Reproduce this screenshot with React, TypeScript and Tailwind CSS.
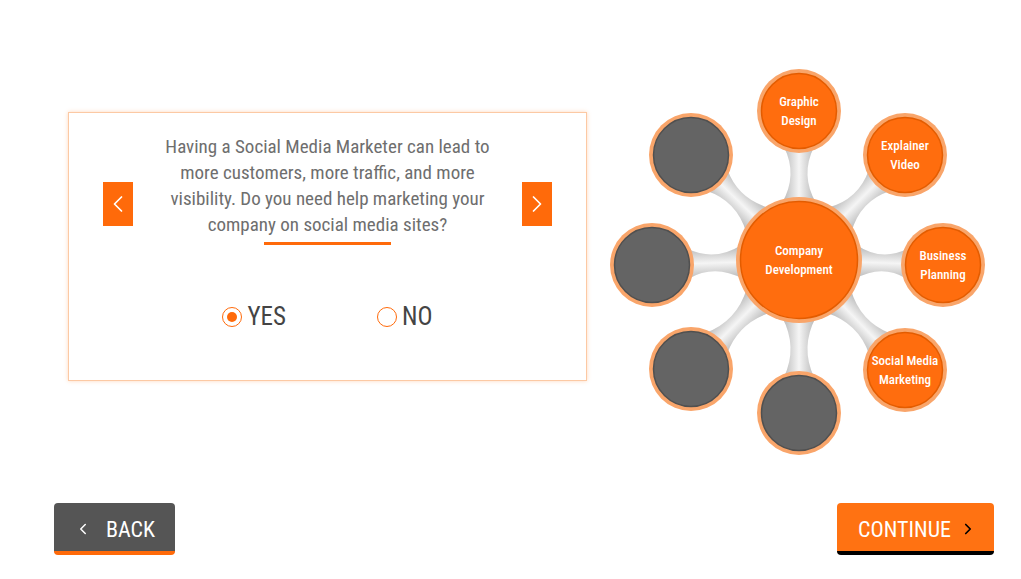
import React from "react";
import { ChevronLeft, ChevronRight } from "lucide-react";

const ORANGE = "#ff6d0e";

type Node = { x: number; y: number; lines?: string[] };

// diagram coordinates, origin at the svg's top-left corner
const CENTER = { x: 195, y: 198, r: 63 };
const R = 42;

const nodes: Node[] = [
  { x: 195, y: 49, lines: ["Graphic", "Design"] },
  { x: 301, y: 93, lines: ["Explainer", "Video"] },
  { x: 339, y: 203, lines: ["Business", "Planning"] },
  { x: 301, y: 308, lines: ["Social Media", "Marketing"] },
  { x: 195, y: 351 },
  { x: 87, y: 307 },
  { x: 48, y: 203 },
  { x: 87, y: 93 },
];

function Spoke({ n }: { n: Node }) {
  const dx = n.x - CENTER.x;
  const dy = n.y - CENTER.y;
  const d = Math.sqrt(dx * dx + dy * dy);
  const angle = (Math.atan2(dy, dx) * 180) / Math.PI;
  const x0 = CENTER.r - 6;
  const x1 = d - R + 6;
  const mid = (x0 + x1) / 2;
  const path = `M ${x0} -17 Q ${mid} -1 ${x1} -15 L ${x1} 15 Q ${mid} 1 ${x0} 17 Z`;
  return (
    <path
      d={path}
      fill="url(#tube)"
      transform={`translate(${CENTER.x} ${CENTER.y}) rotate(${angle})`}
    />
  );
}

function Bubble({ x, y, r, lines, size }: { x: number; y: number; r: number; lines?: string[]; size: number }) {
  const filled = !!lines;
  return (
    <g>
      <circle cx={x} cy={y} r={r} fill="#f9a56a" />
      <circle cx={x} cy={y} r={r - 4.5} fill={filled ? ORANGE : "#646464"} stroke={filled ? "#e35c00" : "#505050"} strokeWidth={1.5} />
      {lines &&
        lines.map((t, i) => (
          <text
            key={t}
            x={x}
            y={y + (i - (lines.length - 1) / 2) * (size + 6) + size * 0.36}
            textAnchor="middle"
            fill="#fff"
            fontSize={size}
            fontWeight={500}
            fontStretch="condensed"
            fontFamily="Roboto, sans-serif"
          >
            {t}
          </text>
        ))}
    </g>
  );
}

function Diagram() {
  return (
    <svg width={390} height={400} viewBox="0 0 390 400" className="block">
      <defs>
        <linearGradient id="tube" x1="0" y1="0" x2="0" y2="1">
          <stop offset="0" stopColor="#b5b5b5" />
          <stop offset="0.5" stopColor="#f5f5f5" />
          <stop offset="1" stopColor="#b5b5b5" />
        </linearGradient>
      </defs>
      {nodes.map((n, i) => (
        <Spoke key={i} n={n} />
      ))}
      {nodes.map((n, i) => (
        <Bubble key={i} x={n.x} y={n.y} r={R} lines={n.lines} size={13} />
      ))}
      <Bubble x={CENTER.x} y={CENTER.y} r={CENTER.r} lines={["Company", "Development"]} size={13} />
    </svg>
  );
}

export default function App() {
  return (
    <div className="w-[1021px] h-[579px] bg-white flex flex-col font-['Roboto',sans-serif] [font-stretch:condensed] overflow-hidden">
      <div className="flex items-start pt-[62px]">
        <div className="ml-[68px] mt-[50px] w-[519px] h-[269px] border border-[#fcc9a4] shadow-[0_0_4px_rgba(255,140,60,0.35)] flex flex-col items-center">
          <div className="w-full flex items-start px-[34px] pt-[21px]">
            <button className="mt-[48px] w-[30px] h-[44px] bg-[#ff6a0a] flex items-center justify-center text-white">
              <ChevronLeft size={28} strokeWidth={1.5} />
            </button>
            <div className="flex-1 flex flex-col items-center">
              <p className="text-[19px] leading-[26px] text-[#6e6e6e] text-center">
                Having a Social Media Marketer can lead to
                <br />
                more customers, more traffic, and more
                <br />
                visibility. Do you need help marketing your
                <br />
                company on social media sites?
              </p>
              <div className="mt-[4px] w-[127px] h-[3px] bg-[#ff6a0a]" />
            </div>
            <button className="mt-[48px] w-[30px] h-[44px] bg-[#ff6a0a] flex items-center justify-center text-white">
              <ChevronRight size={28} strokeWidth={1.5} />
            </button>
          </div>
          <div className="mt-[59px] flex items-center gap-[91px] text-[#444] text-[25px] leading-none">
            <label className="flex items-center gap-[5px]">
              <span className="w-[20px] h-[20px] rounded-full border-[1.5px] border-[#ff6a0a] flex items-center justify-center">
                <span className="w-[10px] h-[10px] rounded-full bg-[#ff6a0a]" />
              </span>
              YES
            </label>
            <label className="flex items-center gap-[5px]">
              <span className="w-[20px] h-[20px] rounded-full border-[1.5px] border-[#ff6a0a]" />
              NO
            </label>
          </div>
        </div>
        <div className="ml-[17px]">
          <Diagram />
        </div>
      </div>
      <div className="mt-[41px] flex items-start justify-between pl-[54px] pr-[27px]">
        <button className="w-[121px] h-[52px] rounded-[4px] bg-[#555] border-b-4 border-[#ff6a0a] flex items-center justify-center gap-[14px] text-white text-[22px] pt-[4px]">
          <ChevronLeft size={18} strokeWidth={2} />
          BACK
        </button>
        <button className="w-[157px] h-[52px] rounded-[4px] bg-[#ff7212] border-b-4 border-black flex items-center justify-center gap-[8px] text-white text-[22px] pt-[4px] pl-[4px]">
          CONTINUE
          <ChevronRight size={18} strokeWidth={2.25} className="text-black" />
        </button>
      </div>
    </div>
  );
}
